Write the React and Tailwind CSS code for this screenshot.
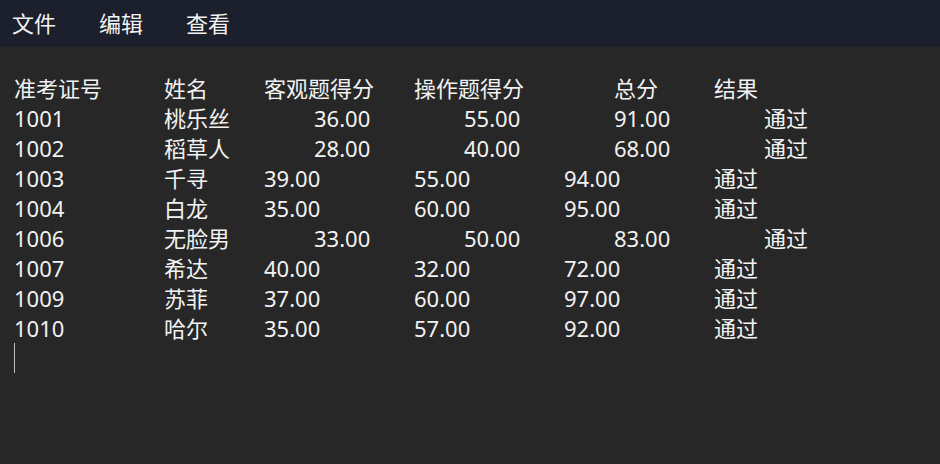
import React from "react";

const rows = [
  { c: ["准考证号", "姓名", "客观题得分", "操作题得分", "总分", "结果"], off: [0, 0, 0, 0, 1, 0] },
  { c: ["1001", "桃乐丝", "36.00", "55.00", "91.00", "通过"], off: [0, 0, 1, 1, 1, 1] },
  { c: ["1002", "稻草人", "28.00", "40.00", "68.00", "通过"], off: [0, 0, 1, 1, 1, 1] },
  { c: ["1003", "千寻", "39.00", "55.00", "94.00", "通过"], off: [0, 0, 0, 0, 0, 0] },
  { c: ["1004", "白龙", "35.00", "60.00", "95.00", "通过"], off: [0, 0, 0, 0, 0, 0] },
  { c: ["1006", "无脸男", "33.00", "50.00", "83.00", "通过"], off: [0, 0, 1, 1, 1, 1] },
  { c: ["1007", "希达", "40.00", "32.00", "72.00", "通过"], off: [0, 0, 0, 0, 0, 0] },
  { c: ["1009", "苏菲", "37.00", "60.00", "97.00", "通过"], off: [0, 0, 0, 0, 0, 0] },
  { c: ["1010", "哈尔", "35.00", "57.00", "92.00", "通过"], off: [0, 0, 0, 0, 0, 0] },
];

export default function App() {
  return (
    <div
      className="w-[940px] h-[464px] bg-[#272727] text-[#f2f2f2] overflow-hidden flex flex-col"
      style={{ fontFamily: '"Noto Sans", "Noto Sans CJK SC", sans-serif' }}
    >
      <div className="h-[47px] bg-[#1c1f2c] flex items-center pl-[12px] gap-[43px] text-[22px] shrink-0">
        <span>文件</span>
        <span>编辑</span>
        <span>查看</span>
      </div>
      <div className="pt-[26px] pl-[14px] text-[22px] leading-[30px]">
        {rows.map((r, i) => (
          <div
            key={i}
            className="grid grid-cols-[150px_100px_150px_150px_150px_1fr] h-[30px] whitespace-nowrap"
          >
            {r.c.map((t, j) => (
              <div key={j} className={r.off[j] ? "pl-[50px]" : ""}>
                {t}
              </div>
            ))}
          </div>
        ))}
        <div className="h-[30px] flex">
          <div className="w-[1px] h-[30px] bg-[#bdbdbd]" />
        </div>
      </div>
    </div>
  );
}
